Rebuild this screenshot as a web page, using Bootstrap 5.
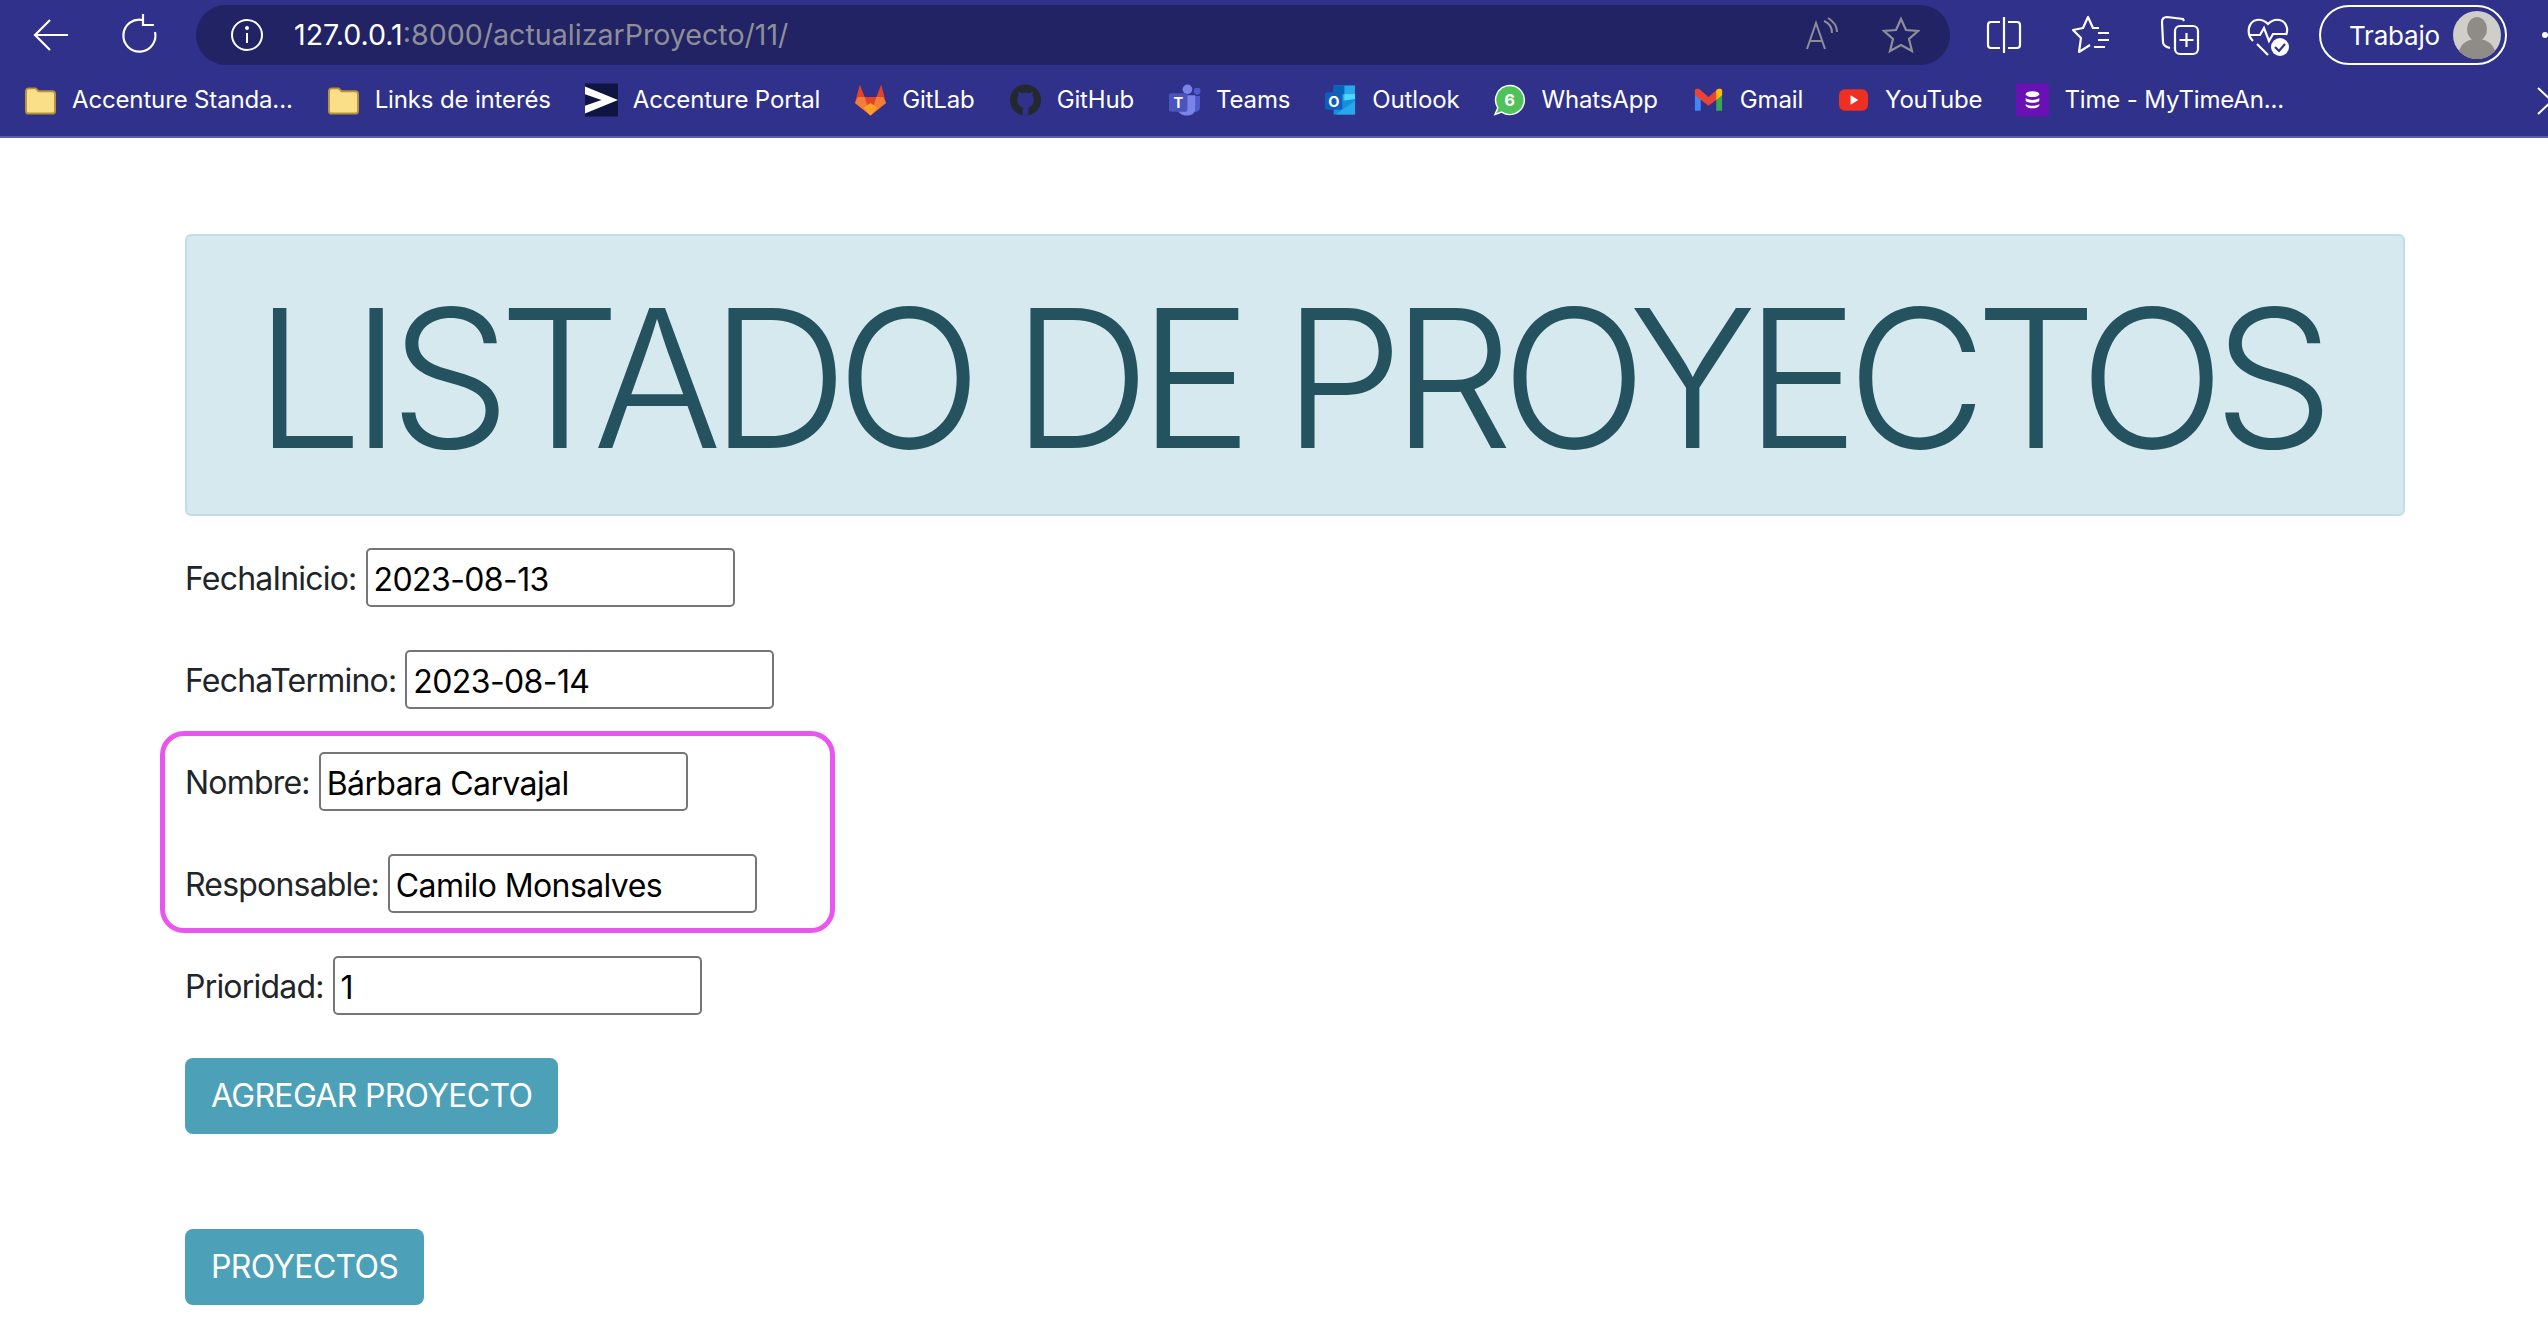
<!DOCTYPE html>
<html lang="es">
<head>
  <meta charset="UTF-8" />
  <title>Actualizar proyecto</title>
  <link href="https://cdn.jsdelivr.net/npm/bootstrap@5.3.3/dist/css/bootstrap.min.css" rel="stylesheet">
  <style>
    html, body { height: 100%; overflow: hidden; }
    body { font-family: Inter, "Liberation Sans", sans-serif; font-size: 32px; color: #212529; background: #fff; }

    /* barra del navegador */
    .browser-bar { background: #2f318b; border-bottom: 2px solid #5b5da6; height: 138px; color: #fff; overflow: hidden; }
    .tool-row { height: 70px; padding-left: 28px; }
    .tool-btn { width: 48px; height: 48px; flex: none; }
    .tool-btn svg { width: 44px; height: 44px; }
    .tool-gap { margin-left: 40px; }
    .address-box { width: 1754px; height: 60px; margin-left: 32px; margin-right: 30px; flex: none; background: #212364; border-radius: 30px; padding: 0 30px 0 34px; }
    .address-text { font-size: 28.6px; margin-left: 30px; }
    .address-text span { color: #8e8e98; }
    .star-gap { margin-left: 42px; }
    .profile-pill { width: 188px; height: 60px; margin-left: 27px; border: 2px solid #fff; border-radius: 30px; font-size: 26px; padding: 0 4px 0 28px; flex: none; letter-spacing: -0.2px; }
    .avatar-svg { width: 48px; height: 48px; }
    .more-dot { width: 6px; height: 6px; border-radius: 50%; background: #fff; margin-left: 35px; flex: none; }
    .bookmark-row { height: 66px; padding: 0 0 6px 24px; font-size: 24px; letter-spacing: -0.15px; gap: 34px; white-space: nowrap; position: relative; }
    .bookmark-item { gap: 15px; }
    .bookmark-item svg { width: 33px; height: 34px; flex: none; }
    .bookmark-more { position: absolute; left: 2536px; top: 17px; width: 20px; height: 28px; }

    /* contenido */
    .page-body { padding: 96px 143px 0 185px; }
    .title-box { height: 282px; background: #d5e9ef; border: 2px solid #c1dfe7; border-radius: 6px; margin-bottom: 32px; }
    .title-text { font-size: 192px; font-weight: 300; line-height: 1; color: #24535f; letter-spacing: -11.9px; margin: 6px 13px 0 0; white-space: nowrap; }
    .form-line { height: 59px; margin-bottom: 43px; gap: 9px; letter-spacing: -0.8px; }
    .form-line label { line-height: 1; padding-top: 3px; }
    .form-line input { width: 369px; height: 59px; border: 2px solid #767676; border-radius: 5px; padding: 4px 6px 0; font-size: 32px; color: #000; font-family: inherit; letter-spacing: -0.6px; background: #fff; }
    .marked-group { position: relative; }
    .marked-frame { position: absolute; left: -25px; top: -21px; width: 675px; height: 202px; border: 5px solid #e855ef; border-radius: 24px; pointer-events: none; }
    .action-btn { display: block; background: #4ca0b7; color: #fff; font-size: 32px; line-height: 48px; padding: 14px 26px; border: 0; border-radius: 8px; letter-spacing: -0.7px; margin-top: 3.5px; }
    .action-btn:hover { background: #4ca0b7; color: #fff; }
    .btn-gap { margin-top: 95px; }
  </style>
</head>
<body>
  <!-- Barra del navegador -->
  <div class="browser-bar">
    <div class="tool-row d-flex align-items-center">
      <div class="tool-btn d-flex align-items-center justify-content-center">
        <svg viewBox="0 0 44 44" fill="none" stroke="#fff" stroke-width="2.2"><path d="M38 22H6M20 7 5 22l15 15"/></svg>
      </div>
      <div class="tool-btn tool-gap d-flex align-items-center justify-content-center">
        <svg viewBox="0 0 44 44" fill="none" stroke="#fff" stroke-width="2.2"><path d="M25 7a16 16 0 1 0 12 12"/><path d="M25 1v11h11"/></svg>
      </div>
      <div class="address-box d-flex align-items-center">
        <svg width="34" height="34" viewBox="0 0 34 34" fill="none" stroke="#fff" stroke-width="2" class="flex-shrink-0"><circle cx="17" cy="17" r="15"/><path d="M17 15v10"/><circle cx="17" cy="10" r="1" fill="#fff"/></svg>
        <div class="address-text flex-grow-1">127.0.0.1<span>:8000/actualizarProyecto/11/</span></div>
        <svg width="36" height="36" viewBox="0 0 36 36" fill="none" stroke="#8e8e98" stroke-width="2" class="flex-shrink-0"><path d="M3 32 12 6l9 26M6 24h12"/><path d="M20 4c5 2 8 6 8 12M24 1c5 3 9 8 9 14"/></svg>
        <svg width="38" height="38" viewBox="0 0 38 38" fill="none" stroke="#8e8e98" stroke-width="2.2" class="flex-shrink-0 star-gap"><path d="m19 3 5 11 12 1-9 8 3 12-11-6-11 6 3-12-9-8 12-1z"/></svg>
      </div>
      <div class="tool-btn d-flex align-items-center justify-content-center">
        <svg viewBox="0 0 44 44" fill="none" stroke="#fff" stroke-width="2.2"><path d="M22 4v36M18 9H9a3 3 0 0 0-3 3v20a3 3 0 0 0 3 3h9M26 9h9a3 3 0 0 1 3 3v20a3 3 0 0 1-3 3h-9"/></svg>
      </div>
      <div class="tool-btn tool-gap d-flex align-items-center justify-content-center">
        <svg viewBox="0 0 44 44" fill="none" stroke="#fff" stroke-width="2.2" stroke-linejoin="round"><path d="M29 15H23L18 4 13 15 3 17l8 8-2 14 11-7"/><path d="M28 20h11M28 27h11M24 34h11"/></svg>
      </div>
      <div class="tool-btn tool-gap d-flex align-items-center justify-content-center">
        <svg viewBox="0 0 44 44" fill="none" stroke="#fff" stroke-width="2.2"><rect x="17" y="13" width="23" height="28" rx="5"/><path d="M28.500 20v14M21.500 27h14"/><path d="M26 8 25 6 9 4c-3 0-5 2-5 5l1 20c0 3 3 5 7 6"/></svg>
      </div>
      <div class="tool-btn tool-gap d-flex align-items-center justify-content-center">
        <svg viewBox="0 0 44 44" fill="none" stroke="#fff" stroke-width="2.2"><path d="M7 28C3 24 2 20 3 15 5 6 15 4 22 11c7-7 17-5 19 4 .5 3 0 5-1 7"/><path d="M4 22h10l4-7 5 13 4-7h13M11 31l11 11"/><circle cx="34" cy="34" r="9" fill="#fff" stroke="none"/><path d="m29 34 4 4 6-7" stroke="#2f318b"/></svg>
      </div>
      <div class="profile-pill d-flex align-items-center justify-content-between">
        <span>Trabajo</span>
        <svg class="avatar-svg" viewBox="0 0 48 48"><circle cx="24" cy="24" r="24" fill="#cfcec9"/><ellipse cx="24" cy="18" rx="10" ry="12" fill="#8f8c87"/><path d="M6 40c3-9 10-12 18-12s15 3 18 12a24 24 0 0 1-36 0z" fill="#8f8c87"/></svg>
      </div>
      <div class="more-dot"></div>
    </div>

    <div class="bookmark-row d-flex align-items-center">
      <div class="bookmark-item d-flex align-items-center">
        <svg viewBox="0 0 34 34"><path d="M2 8a3 3 0 0 1 3-3h7l3 3h14a3 3 0 0 1 3 3v17a3 3 0 0 1-3 3H5a3 3 0 0 1-3-3z" fill="#fbdf88" stroke="#b7923a" stroke-width="2"/></svg>
        <span>Accenture Standa...</span>
      </div>
      <div class="bookmark-item d-flex align-items-center">
        <svg viewBox="0 0 34 34"><path d="M2 8a3 3 0 0 1 3-3h7l3 3h14a3 3 0 0 1 3 3v17a3 3 0 0 1-3 3H5a3 3 0 0 1-3-3z" fill="#fbdf88" stroke="#b7923a" stroke-width="2"/></svg>
        <span>Links de interés</span>
      </div>
      <div class="bookmark-item d-flex align-items-center">
        <svg viewBox="0 0 34 34"><rect width="34" height="34" fill="#0f1440"/><path d="M0 3 34 17 0 31v-8l17-6L0 11z" fill="#fff"/></svg>
        <span>Accenture Portal</span>
      </div>
      <div class="bookmark-item d-flex align-items-center">
        <svg viewBox="0 0 34 34"><path d="M17 33 1 20 6 1l5 13h12l5-13 5 19z" fill="#e24329"/><path d="m17 33-6-19H4l-3 6z" fill="#f47b3a"/><path d="m17 33 6-19h7l3 6z" fill="#f47b3a"/><path d="m17 33-7-8 7-5 7 5z" fill="#fca326"/></svg>
        <span>GitLab</span>
      </div>
      <div class="bookmark-item d-flex align-items-center">
        <svg viewBox="0 0 34 34"><circle cx="17" cy="17" r="16" fill="#24292f"/><path d="M10 22c-2-3-2-8 0-10l-1-4 4 2c3-1 5-1 8 0l4-2-1 4c2 2 2 7 0 10-1 2-3 2-4 3v8h-6v-8c-1-1-3-1-4-3z" fill="#2f318b"/></svg>
        <span>GitHub</span>
      </div>
      <div class="bookmark-item d-flex align-items-center">
        <svg viewBox="0 0 34 34"><circle cx="20" cy="6" r="5" fill="#7b83eb"/><circle cx="30" cy="8" r="3.500" fill="#5059c9"/><path d="M26 13h7v11c0 4-3 6-6 5z" fill="#5059c9"/><path d="M10 12h18v14c0 5-4 7-9 7s-9-3-9-7z" fill="#7b83eb"/><rect x="1" y="10" width="19" height="19" rx="2" fill="#4b53bc"/><text x="10.500" y="25" font-size="15" font-weight="700" fill="#fff" text-anchor="middle" font-family="Inter, sans-serif">T</text></svg>
        <span>Teams</span>
      </div>
      <div class="bookmark-item d-flex align-items-center">
        <svg viewBox="0 0 34 34"><rect x="10" y="2" width="22" height="17" fill="#28a8ea"/><rect x="10" y="2" width="11" height="9" fill="#0364b8"/><rect x="21" y="11" width="11" height="8" fill="#50d9ff"/><path d="M10 19 32 16v16H10z" fill="#1490df"/><path d="m12 32 20-14v14z" fill="#28a8ea"/><rect x="1" y="9" width="18" height="18" rx="2" fill="#0f5ebd"/><text x="10" y="24" font-size="15" font-weight="700" fill="#fff" text-anchor="middle" font-family="Inter, sans-serif">O</text></svg>
        <span>Outlook</span>
      </div>
      <div class="bookmark-item d-flex align-items-center">
        <svg viewBox="0 0 34 34"><path d="M17 2a15 15 0 1 1-8 27.500L2 32l3-7A15 15 0 0 1 17 2z" fill="#4fc35a" stroke="#fff" stroke-width="1.500"/><text x="17" y="23" font-size="17" font-weight="700" fill="#fff" text-anchor="middle" font-family="Inter, sans-serif">6</text></svg>
        <span>WhatsApp</span>
      </div>
      <div class="bookmark-item d-flex align-items-center">
        <svg viewBox="0 0 34 34"><path d="M3 7v21h6V14z" fill="#4285f4"/><path d="M31 7v21h-6V14z" fill="#34a853"/><path d="M3 7c1-2 4-2 6 0l8 7 8-7c2-2 5-2 6 0v5L17 23 3 12z" fill="#ea4335"/><path d="M25 7c2-2 5-2 6 0v5l-6 5z" fill="#fbbc04"/></svg>
        <span>Gmail</span>
      </div>
      <div class="bookmark-item d-flex align-items-center">
        <svg viewBox="0 0 34 34"><rect x="2" y="6" width="30" height="22" rx="6" fill="#ee2f22"/><path d="m14 12 8 5-8 5z" fill="#fff"/></svg>
        <span>YouTube</span>
      </div>
      <div class="bookmark-item d-flex align-items-center">
        <svg viewBox="0 0 34 34"><rect width="34" height="34" fill="#6a11b5"/><ellipse cx="17" cy="11" rx="7" ry="3" fill="#fff"/><path d="M10 15c2 2.500 12 2.500 14 0v3c-2 2.500-12 2.500-14 0zM10 21c2 2.500 12 2.500 14 0v2c-2 3.500-12 3.500-14 0z" fill="#fff"/></svg>
        <span>Time - MyTimeAn...</span>
      </div>
      <svg class="bookmark-more" viewBox="0 0 20 28" fill="none" stroke="#fff" stroke-width="2"><path d="m2 1 14 13L2 27"/></svg>
    </div>
  </div>

  <!-- Contenido -->
  <main class="page-body">
    <div class="title-box d-flex align-items-center justify-content-center" role="alert">
      <h1 class="title-text">LISTADO DE PROYECTOS</h1>
    </div>

    <form>
      <div class="form-line d-flex align-items-center">
        <label for="fechaInicio">FechaInicio:</label>
        <input id="fechaInicio" type="text" value="2023-08-13">
      </div>
      <div class="form-line d-flex align-items-center">
        <label for="fechaTermino">FechaTermino:</label>
        <input id="fechaTermino" type="text" value="2023-08-14">
      </div>
      <div class="marked-group">
        <div class="marked-frame"></div>
        <div class="form-line d-flex align-items-center">
          <label for="nombre">Nombre:</label>
          <input id="nombre" type="text" value="Bárbara Carvajal">
        </div>
        <div class="form-line d-flex align-items-center">
          <label for="responsable">Responsable:</label>
          <input id="responsable" type="text" value="Camilo Monsalves">
        </div>
      </div>
      <div class="form-line d-flex align-items-center">
        <label for="prioridad">Prioridad:</label>
        <input id="prioridad" type="text" value="1">
      </div>
      <button type="button" class="btn action-btn">AGREGAR PROYECTO</button>
    </form>
    <a href="#" class="btn action-btn btn-gap d-inline-block">PROYECTOS</a>
  </main>

  <script src="https://cdn.jsdelivr.net/npm/bootstrap@5.3.3/dist/js/bootstrap.bundle.min.js"></script>
</body>
</html>
